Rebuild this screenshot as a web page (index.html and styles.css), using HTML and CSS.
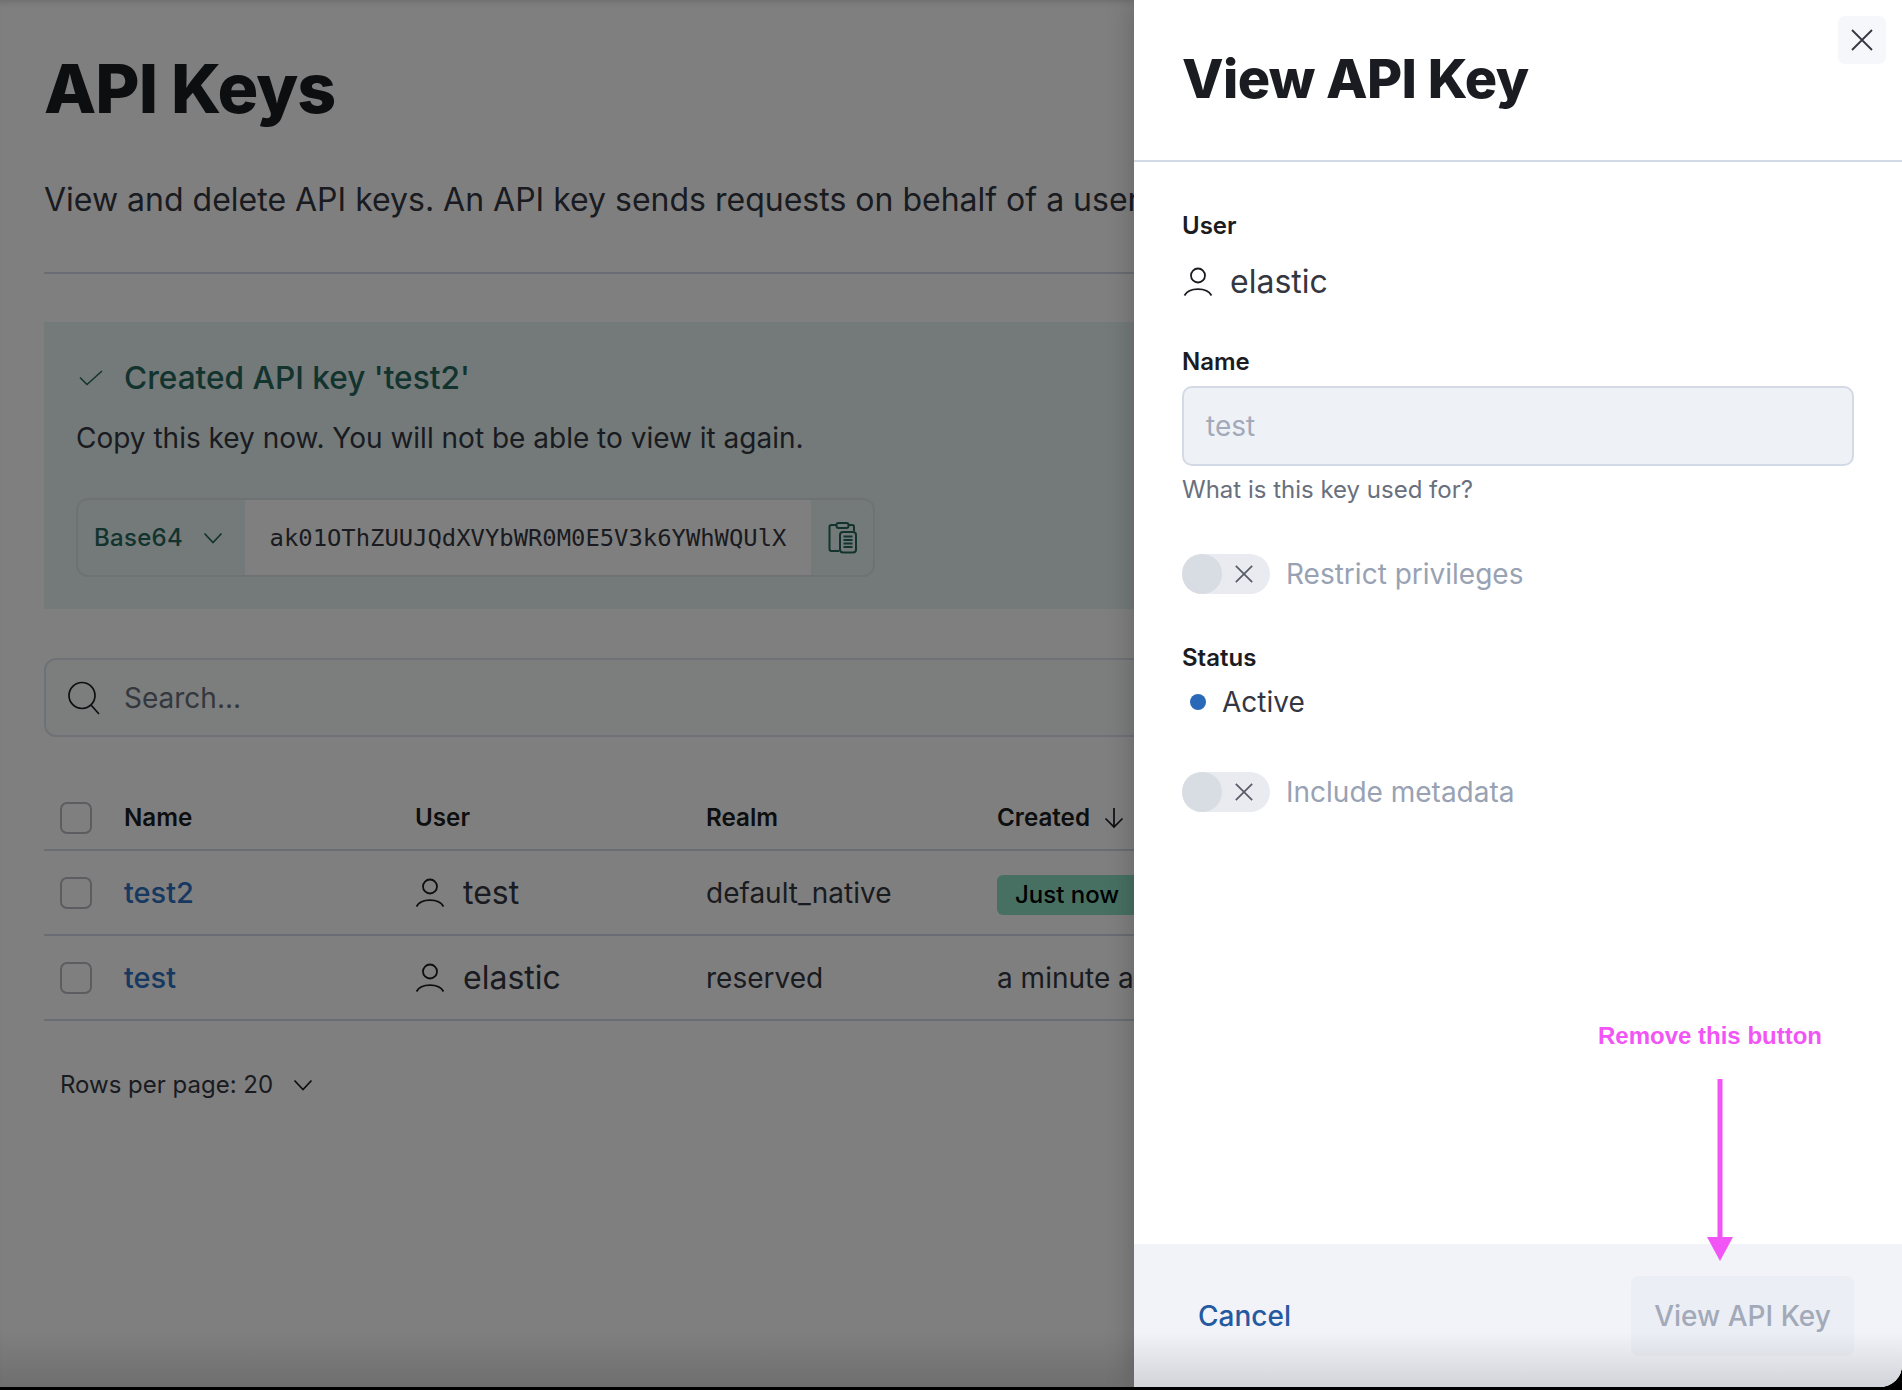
FILE: index.html
```html
<!DOCTYPE html>
<html lang="en">
<head>
<meta charset="utf-8">
<title>API Keys</title>
<link rel="stylesheet" href="styles.css">
</head>
<body>
<div class="window">
  <main class="page">
    <h1 class="page-title">API Keys</h1>
    <p class="page-desc">View and delete API keys. An API key sends requests on behalf of a user.</p>
    <hr class="rule">
    <section class="callout">
      <div class="callout-title">
        <svg class="ico-check" viewBox="0 0 24 16"><path d="M1 7.500 8 14.500 23 1"/></svg>
        <span>Created API key 'test2'</span>
      </div>
      <p class="callout-text">Copy this key now. You will not be able to view it again.</p>
      <div class="key-group">
        <div class="key-select">
          <span>Base64</span>
          <svg class="ico-chev" viewBox="0 0 20 12"><path d="M1.500 1.500 10 10.500 18.500 1.500"/></svg>
        </div>
        <div class="key-value">ak01OThZUUJQdXVYbWR0M0E5V3k6YWhWQUlX</div>
        <div class="key-copy">
          <svg class="ico-clip" viewBox="0 0 30 32">
            <path d="M9 3H3.500Q1.500 3 1.500 5V27Q1.500 29 3.500 29H11"/>
            <path d="M21 3H24Q26 3 26 5V9"/>
            <rect x="8.500" y="1" width="12" height="5" rx="2"/>
            <rect x="12" y="10" width="16" height="20.500" rx="3"/>
            <path d="M15.500 14.500H24.500M15.500 18H24.500M15.500 21.500H24.500M15.500 25H24.500"/>
          </svg>
        </div>
      </div>
    </section>
    <div class="search">
      <svg class="ico-search" viewBox="0 0 34 34"><circle cx="15" cy="14.500" r="13"/><path d="M24 24 32 33"/></svg>
      <span>Search...</span>
    </div>
    <div class="table">
      <div class="row head">
        <span class="cell-check"><i class="box"></i></span>
        <span class="cell">Name</span>
        <span class="cell">User</span>
        <span class="cell">Realm</span>
        <span class="cell created">Created
          <svg class="ico-arrow" viewBox="0 0 20 22"><path d="M10 1V20M1.500 11.500 10 20 18.500 11.500"/></svg>
        </span>
      </div>
      <div class="row">
        <span class="cell-check"><i class="box"></i></span>
        <span class="cell"><a class="link">test2</a></span>
        <span class="cell user">
          <svg class="ico-user" viewBox="0 0 30 30"><circle cx="15" cy="8.500" r="7"/><path d="M1.500 28.500C6 20 24 20 28.500 28.500"/></svg>
          test
        </span>
        <span class="cell">default_native</span>
        <span class="cell"><span class="badge">Just now</span></span>
      </div>
      <div class="row">
        <span class="cell-check"><i class="box"></i></span>
        <span class="cell"><a class="link">test</a></span>
        <span class="cell user">
          <svg class="ico-user" viewBox="0 0 30 30"><circle cx="15" cy="8.500" r="7"/><path d="M1.500 28.500C6 20 24 20 28.500 28.500"/></svg>
          elastic
        </span>
        <span class="cell">reserved</span>
        <span class="cell">a minute ago</span>
      </div>
    </div>
    <div class="pager">
      <span>Rows per page: 20</span>
      <svg class="ico-chev dark" viewBox="0 0 20 12"><path d="M1.500 1.500 10 10.500 18.500 1.500"/></svg>
    </div>
  </main>

  <div class="overlay"></div>

  <aside class="flyout">
    <header class="fly-head">
      <h2 class="fly-title">View API Key</h2>
      <button class="close"><svg class="ico-x" viewBox="0 0 22 22"><path d="M1 1 21 21M21 1 1 21"/></svg></button>
    </header>
    <div class="fly-body">
      <div class="label">User</div>
      <div class="user-value">
        <svg class="ico-user" viewBox="0 0 30 30"><circle cx="15" cy="8.500" r="7"/><path d="M1.500 28.500C6 20 24 20 28.500 28.500"/></svg>
        elastic
      </div>
      <div class="label name-label">Name</div>
      <div class="input">test</div>
      <div class="help">What is this key used for?</div>
      <div class="switch first">
        <span class="track"><span class="thumb"></span><svg class="ico-x small" viewBox="0 0 22 22"><path d="M2 2 20 20M20 2 2 20"/></svg></span>
        <span>Restrict privileges</span>
      </div>
      <div class="label status-label">Status</div>
      <div class="status"><i class="dot"></i>Active</div>
      <div class="switch second">
        <span class="track"><span class="thumb"></span><svg class="ico-x small" viewBox="0 0 22 22"><path d="M2 2 20 20M20 2 2 20"/></svg></span>
        <span>Include metadata</span>
      </div>
    </div>
    <footer class="fly-foot">
      <span class="cancel">Cancel</span>
      <span class="submit">View API Key</span>
    </footer>
  </aside>

  <div class="annotation">
    <span class="note">Remove this button</span>
    <svg class="note-arrow" viewBox="0 0 26 182"><path d="M10.500 0H15.500V158H26L13 182 0 158H10.500Z"/></svg>
  </div>
  <div class="edge"></div>
</div>
</body>
</html>
```

FILE: styles.css
```css
* { box-sizing: border-box; }
html, body { margin: 0; height: 100%; background: #000; }
body { height: 1390px; overflow: hidden; font-family: Inter, "Noto Sans", sans-serif; color: #343741; }

.window {
  position: relative;
  height: 1387px;
  overflow: hidden;
  background: #fff;
  border-bottom-right-radius: 22px;
}

.page { padding: 0 0 0 44px; font-size: 28px; line-height: 40px; width: 1902px; }
.page-title { margin: 0; padding-top: 52px; font-size: 68px; line-height: 72px; font-weight: 800; color: #1a1c21; letter-spacing: -1px; }
.page-desc { margin: 0; padding-top: 56px; white-space: nowrap; font-size: 32px; }
.rule { margin: 52px 0 0; border: 0; height: 2px; background: #d3dae6; }

.callout { margin-top: 48px; height: 287px; padding: 36px 32px; background: #e6f4f2; }
.callout-title { display: flex; align-items: center; gap: 21px; font-size: 31.600px; line-height: 40px; font-weight: 500; padding-left: 3px; color: #24665c; }
.ico-check { width: 24px; height: 16px; fill: none; stroke: #24665c; stroke-width: 1.500; }
.callout-text { margin: 20px 0 0; line-height: 40px; }
.key-group { margin-top: 40px; width: 799px; height: 79px; display: flex; border: 2px solid #dce4e6; border-radius: 12px; overflow: hidden; font-size: 24px; }
.key-select { width: 167px; display: flex; align-items: center; gap: 20px; padding-left: 16px; color: #24665c; font-weight: 500; letter-spacing: .3px; }
.ico-chev { width: 20px; height: 12px; fill: none; stroke: #24665c; stroke-width: 1.700; flex: none; }
.ico-chev.dark { stroke: #1a1c21; }
.key-value { width: 566px; background: #fff; display: flex; align-items: center; justify-content: center; font-family: "DejaVu Sans Mono", monospace; font-size: 23.850px; color: #343741; white-space: nowrap; }
.key-copy { flex: 1; display: flex; align-items: center; justify-content: center; padding-left: 2px; }
.ico-clip { width: 30px; height: 32px; fill: none; stroke: #24665c; stroke-width: 2; }

.search { margin-top: 49px; height: 79px; width: 1900px; display: flex; align-items: center; gap: 23px; padding-left: 22px; border: 2px solid #dce2ec; border-radius: 12px; background: #f9fbfb; color: #69707d; }
.ico-search { width: 34px; height: 34px; fill: none; stroke: #1a1c21; stroke-width: 1.700; flex: none; margin-left: -1px; }

.table { margin-top: 42px; width: 1858px; }
.row { display: grid; grid-template-columns: 80px repeat(4, 291px); align-items: center; height: 85px; border-bottom: 2px solid #d3dae6; }
.row.head { height: 72px; padding-top: 7px; font-weight: 600; font-size: 24.200px; color: #1a1c21; }
.cell-check { padding-left: 16px; display: flex; }
.box { width: 32px; height: 32px; border: 2px solid #b8bbc1; border-radius: 7px; display: block; }
.cell { white-space: nowrap; display: flex; align-items: center; }
.created { gap: 14px; }
.ico-arrow { width: 20px; height: 22px; fill: none; stroke: #1a1c21; stroke-width: 1.700; }
.link { color: #2f70c0; font-weight: 500; font-size: 29px; }
.user { gap: 18px; font-size: 32px; }
.ico-user { width: 30px; height: 30px; fill: none; stroke: #1a1c21; stroke-width: 1.800; flex: none; }
.badge { display: inline-flex; align-items: center; height: 40px; margin-top: 5px; padding: 0 18px; width: 180px; background: #8fe0c4; border-radius: 6px; font-size: 24px; font-weight: 500; color: #000; white-space: nowrap; }

.pager { margin-top: 44px; margin-left: 16px; display: flex; align-items: center; gap: 20px; font-size: 24px; }

.overlay { position: absolute; inset: 0; background: rgba(0, 0, 0, .5); box-shadow: inset 0 6px 6px -4px rgba(0, 0, 0, .15); }

.flyout { position: absolute; top: 0; right: 0; bottom: 0; width: 768px; background: #fff; display: flex; flex-direction: column; box-shadow: -4px 0 24px rgba(0, 0, 0, .18); }
.fly-head { height: 162px; border-bottom: 2px solid #d3dae6; padding: 45px 48px 0 48px; }
.fly-title { margin: 0; font-size: 54px; line-height: 68px; font-weight: 800; color: #1a1c21; letter-spacing: -.6px; }
.close { position: absolute; top: 16px; right: 16px; width: 48px; height: 48px; padding: 0; border: 0; border-radius: 7px; background: #f5f7fa; display: flex; align-items: center; justify-content: center; }
.ico-x { width: 22px; height: 22px; fill: none; stroke: #343741; stroke-width: 1.800; }
.ico-x.small { width: 20px; height: 20px; stroke: #555a66; }

.fly-body { flex: 1; padding: 47px 48px 0 48px; font-size: 28px; }
.label { font-size: 24px; line-height: 34px; font-weight: 600; color: #1a1c21; }
.user-value { margin-top: 19px; display: flex; align-items: center; gap: 17px; line-height: 40px; color: #343741; font-size: 32px; }
.user-value .ico-user { margin-left: 1px; }
.name-label { margin-top: 43px; }
.input { margin-top: 7px; height: 80px; border: 2px solid #d3dae6; border-radius: 10px; background: #eef2f7; color: #a2a9b8; padding-left: 22px; display: flex; align-items: center; }
.help { margin-top: 8px; font-size: 24px; line-height: 32px; color: #69707d; }
.switch { display: flex; align-items: center; gap: 16px; height: 40px; color: #98a2b3; }
.switch.first { margin-top: 48px; }
.switch.second { margin-top: 50px; }
.track { position: relative; width: 88px; height: 40px; border-radius: 20px; background: #e9ebf0; display: flex; align-items: center; justify-content: flex-end; padding-right: 16px; }
.thumb { position: absolute; left: 0; top: 0; width: 40px; height: 40px; border-radius: 50%; background: #d8dce3; }
.status-label { margin-top: 47px; }
.status { margin-top: 7px; height: 40px; display: flex; align-items: center; gap: 16px; padding-left: 8px; color: #343741; }
.dot { width: 16px; height: 16px; border-radius: 50%; background: #2a69b8; }

.fly-foot { height: 143px; padding: 32px 48px 0 64px; background: #f1f3f9; display: flex; justify-content: space-between; align-items: flex-start; font-size: 28px; }
.cancel { color: #2559a0; font-weight: 500; line-height: 80px; }
.submit { width: 223px; height: 80px; border-radius: 8px; background: #ebeef4; color: #a2a9b8; font-weight: 500; display: flex; align-items: center; justify-content: center; }

.annotation { position: absolute; left: 1599px; top: 1020px; width: 222px; display: flex; flex-direction: column; align-items: center; }
.note { font-family: "Liberation Sans", Arial, sans-serif; font-weight: 700; font-size: 24px; line-height: 32px; color: #f155f5; white-space: nowrap; }
.note-arrow { margin-top: 27px; margin-left: 20px; width: 26px; height: 182px; fill: #f155f5; }

.edge { position: absolute; left: 0; right: 0; bottom: 0; height: 55px; background: linear-gradient(to bottom, rgba(0, 0, 0, 0), rgba(0, 0, 0, .13)); }
```
